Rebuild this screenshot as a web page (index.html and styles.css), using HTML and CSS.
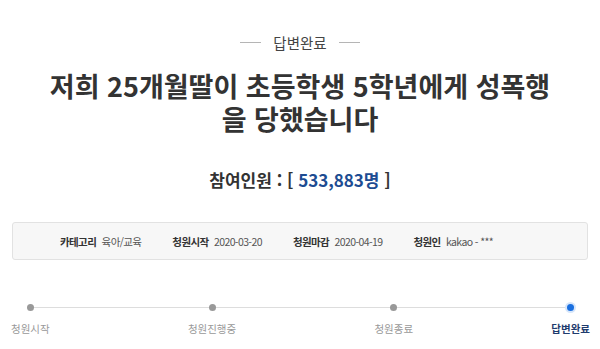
FILE: index.html
```html
<!DOCTYPE html>
<html lang="ko">
<head>
    <meta charset="UTF-8">
    <meta name="viewport" content="width=device-width, initial-scale=1.0">
    <title>청원 상세</title>
    <link rel="stylesheet" href="styles.css">
</head>
<body>
    <div class="petition">
        <div class="status-tag">
            <span class="status-line"></span>
            <span class="status-text">답변완료</span>
            <span class="status-line"></span>
        </div>

        <h1 class="petition-title">저희 25개월딸이 초등학생 5학년에게 성폭행을 당했습니다</h1>

        <p class="counter">참여인원 : [ <span class="counter-num">533,883명</span> ]</p>

        <ul class="info-box">
            <li><strong>카테고리</strong> 육아/교육</li>
            <li><strong>청원시작</strong> 2020-03-20</li>
            <li><strong>청원마감</strong> 2020-04-19</li>
            <li><strong>청원인</strong> kakao - ***</li>
        </ul>

        <div class="progress">
            <div class="step"><span class="dot"></span><span class="label">청원시작</span></div>
            <div class="step"><span class="dot"></span><span class="label">청원진행중</span></div>
            <div class="step"><span class="dot"></span><span class="label">청원종료</span></div>
            <div class="step current"><span class="dot"></span><span class="label">답변완료</span></div>
        </div>
    </div>
</body>
</html>
```

FILE: styles.css
```css
body {
    margin: 0;
    background: #fff;
    font-family: 'Noto Sans CJK KR', 'Noto Sans', sans-serif;
    color: #333;
}

.petition {
    padding: 30px 12px 0;
}

.status-tag {
    display: flex;
    justify-content: center;
    align-items: center;
    gap: 12px;
    height: 24px;
}

.status-line {
    width: 21px;
    height: 1px;
    background: #b5b5b5;
}

.status-text {
    font-size: 14.5px;
    color: #444;
}

.petition-title {
    margin: 15px 36px 0;
    text-align: center;
    font-size: 27px;
    line-height: 33px;
    font-weight: 700;
    color: #333;
}

.counter {
    margin: 32px 0 0;
    text-align: center;
    font-size: 17px;
    font-weight: 700;
    color: #333;
}

.counter-num {
    color: #1d4c92;
}

.info-box {
    list-style: none;
    margin: 30px 0 0;
    padding: 0 0 0 47px;
    height: 36px;
    display: flex;
    align-items: center;
    gap: 31px;
    background: #f7f7f7;
    border: 1px solid #e2e2e2;
    border-radius: 3px;
    font-size: 10.5px;
    letter-spacing: -0.6px;
    color: #555;
    white-space: nowrap;
}

.info-box strong {
    color: #333;
    margin-right: 3px;
}

.progress {
    position: relative;
    display: flex;
    justify-content: space-between;
    margin: 44px -2px 0 -1px;
}

.progress::before {
    content: "";
    position: absolute;
    left: 19px;
    right: 19px;
    top: 3px;
    height: 1px;
    background: #ddd;
}

.step {
    position: relative;
    display: flex;
    flex-direction: column;
    align-items: center;
    gap: 10px;
}

.dot {
    width: 7px;
    height: 7px;
    border-radius: 50%;
    background: #999;
}

.label {
    font-size: 10.5px;
    color: #999;
}

.current .dot {
    background: #1a6fe0;
    box-shadow: 0 0 0 2px #d7e6fa;
}

.current .label {
    color: #1f3c6e;
    font-weight: 700;
}
```
